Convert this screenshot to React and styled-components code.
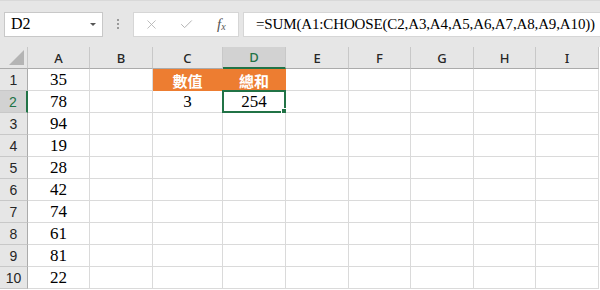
import React from 'react'
import styled, { createGlobalStyle } from 'styled-components'
import { X, Check } from 'lucide-react'

const GlobalStyle = createGlobalStyle`
  body {
    margin: 0;
    background: #fff;
    overflow: hidden;
  }
`

const columns = ['A', 'B', 'C', 'D', 'E', 'F', 'G', 'H', 'I']
const widths = [28, 62, 63, 70, 63, 63, 62, 63, 62, 63]
const values = [35, 78, 94, 19, 28, 42, 74, 61, 81, 22]

const Frame = styled.div`
  width: 600px;
  height: 290px;
  overflow: hidden;
  background: #fff;
`

const Toolbar = styled.div`
  display: flex;
  align-items: center;
  height: 47px;
  box-sizing: border-box;
  padding-left: 4px;
  background: #e6e6e6;
  border-top: 1px solid #d9d9d9;
`

const NameBox = styled.div`
  flex-shrink: 0;
  width: 99px;
  height: 25px;
  box-sizing: border-box;
  display: flex;
  align-items: center;
  justify-content: space-between;
  padding: 0 6px 0 6px;
  background: #fff;
  border: 1px solid #c8c8c8;
  font-family: 'Liberation Serif', serif;
  font-size: 16px;
  color: #000;
`

const Caret = styled.span`
  width: 0;
  height: 0;
  border-left: 3px solid transparent;
  border-right: 3px solid transparent;
  border-top: 3px solid #555;
`

const Grip = styled.div`
  flex-shrink: 0;
  width: 30px;
  display: flex;
  flex-direction: column;
  align-items: center;
  gap: 2px;

  span {
    width: 2px;
    height: 2px;
    background: #9a9a9a;
  }
`

const ButtonBox = styled.div`
  flex-shrink: 0;
  width: 106px;
  height: 25px;
  box-sizing: border-box;
  display: flex;
  align-items: center;
  background: #fff;
  border: 1px solid #d6d6d6;
  color: #b3b3b3;
`

const IconSlot = styled.div`
  width: 36px;
  display: flex;
  justify-content: center;
`

const Fx = styled.div`
  width: 34px;
  text-align: center;
  font-family: 'Liberation Serif', serif;
  font-style: italic;
  font-size: 15px;
  color: #555;

  sub {
    font-size: 10px;
    vertical-align: -1px;
  }
`

const Formula = styled.div`
  flex: 1;
  min-width: 0;
  overflow: hidden;
  height: 25px;
  box-sizing: border-box;
  margin-left: 4px;
  padding-left: 12px;
  display: flex;
  align-items: center;
  background: #fff;
  border: 1px solid #d6d6d6;
  border-right: none;
  font-family: 'Liberation Serif', serif;
  font-size: 15px;
  letter-spacing: -0.14px;
  color: #000;
  white-space: nowrap;
`

const Sheet = styled.div`
  display: grid;
  grid-template-columns: ${widths.map((w) => `${w}px`).join(' ')};
  grid-auto-rows: 22px;
`

const Corner = styled.div`
  position: relative;
  background: #e6e6e6;
  border-right: 1px solid #c8c8c8;
  border-bottom: 1px solid #ababab;

  &::after {
    content: '';
    position: absolute;
    right: 3px;
    bottom: 3px;
    width: 0;
    height: 0;
    border-left: 15px solid transparent;
    border-bottom: 15px solid #b4b4b4;
  }
`

const ColHead = styled.div`
  display: flex;
  align-items: center;
  justify-content: center;
  box-sizing: border-box;
  background: ${(p) => (p.$active ? '#d2d2d2' : '#e6e6e6')};
  color: ${(p) => (p.$active ? '#217346' : '#262626')};
  border-right: 1px solid #c8c8c8;
  border-bottom: ${(p) => (p.$active ? '2px solid #217346' : '1px solid #ababab')};
  font-family: 'Noto Sans', sans-serif;
  font-size: 13px;
  font-weight: 500;
`

const RowHead = styled.div`
  display: flex;
  align-items: center;
  justify-content: center;
  box-sizing: border-box;
  background: ${(p) => (p.$active ? '#d2d2d2' : '#e6e6e6')};
  color: ${(p) => (p.$active ? '#217346' : '#262626')};
  border-right: ${(p) => (p.$active ? '2px solid #217346' : '1px solid #ababab')};
  border-bottom: 1px solid #c8c8c8;
  font-family: 'Liberation Sans', sans-serif;
  font-size: 14px;
`

const Cell = styled.div`
  position: relative;
  display: flex;
  align-items: center;
  justify-content: center;
  box-sizing: border-box;
  background: ${(p) => (p.$title ? '#ed7d31' : '#fff')};
  color: ${(p) => (p.$title ? '#fff' : '#000')};
  border-right: 1px solid ${(p) => (p.$title ? '#ed7d31' : '#dadada')};
  border-bottom: 1px solid ${(p) => (p.$title ? '#ed7d31' : '#dadada')};
  font-family: ${(p) =>
    p.$title
      ? "'Noto Sans CJK TC', sans-serif"
      : "'Liberation Serif', serif"};
  font-weight: ${(p) => (p.$title ? 700 : 400)};
  font-size: ${(p) => (p.$title ? '15px' : '17px')};
  padding-top: 1px;
`

const Selection = styled.div`
  position: absolute;
  left: -1px;
  top: -1px;
  right: -1px;
  bottom: -1px;
  border: 2px solid #217346;
  pointer-events: none;

  &::after {
    content: '';
    position: absolute;
    right: -4px;
    bottom: -4px;
    width: 5px;
    height: 5px;
    background: #217346;
    border: 1px solid #fff;
  }
`

function cellContent(row, col) {
  if (col === 'A') return values[row - 1]
  if (row === 1 && col === 'C') return '數值'
  if (row === 1 && col === 'D') return '總和'
  if (row === 2 && col === 'C') return 3
  if (row === 2 && col === 'D') return 254
  return ''
}

export default function App() {
  const rows = values.map((_, i) => i + 1)
  return (
    <Frame>
      <GlobalStyle />
      <Toolbar>
        <NameBox>
          D2
          <Caret />
        </NameBox>
        <Grip>
          <span />
          <span />
          <span />
        </Grip>
        <ButtonBox>
          <IconSlot>
            <X size={15} strokeWidth={1.4} />
          </IconSlot>
          <IconSlot>
            <Check size={15} strokeWidth={1.6} />
          </IconSlot>
          <Fx>
            f<sub>x</sub>
          </Fx>
        </ButtonBox>
        <Formula>=SUM(A1:CHOOSE(C2,A3,A4,A5,A6,A7,A8,A9,A10))</Formula>
      </Toolbar>
      <Sheet>
        <Corner />
        {columns.map((c) => (
          <ColHead key={c} $active={c === 'D'}>
            {c}
          </ColHead>
        ))}
        {rows.map((r) => (
          <React.Fragment key={r}>
            <RowHead $active={r === 2}>{r}</RowHead>
            {columns.map((c) => (
              <Cell key={c} $title={r === 1 && (c === 'C' || c === 'D')}>
                {cellContent(r, c)}
                {r === 2 && c === 'D' && <Selection />}
              </Cell>
            ))}
          </React.Fragment>
        ))}
      </Sheet>
    </Frame>
  )
}
